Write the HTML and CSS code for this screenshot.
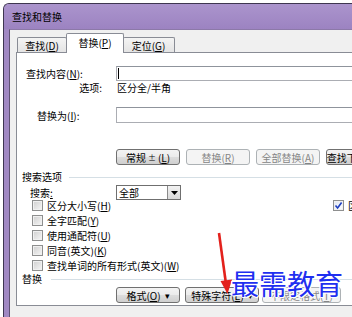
FILE: index.html
```html
<!DOCTYPE html>
<html lang="zh-CN">
<head>
<meta charset="utf-8">
<title>查找和替换</title>
<link rel="stylesheet" href="styles.css">
</head>
<body>
<div class="window">
  <div class="titlebar">查找和替换</div>
  <div class="frame">
    <div class="client">
      <div class="tabs">
        <div class="tab tab-first">查找(<u>D</u>)</div>
        <div class="tab tab-active">替换(<u>P</u>)</div>
        <div class="tab tab-last">定位(<u>G</u>)</div>
      </div>
      <div class="panel">
        <div class="row row-find">
          <span class="label label-find">查找内容(<u>N</u>):</span>
          <div class="input"><span class="caret"></span></div>
        </div>
        <div class="row row-opt">
          <span class="label label-opt">选项:</span>
          <span class="value">区分全/半角</span>
        </div>
        <div class="row row-repl">
          <span class="label label-repl">替换为(<u>I</u>):</span>
          <div class="input"></div>
        </div>
        <div class="btnrow btnrow-top">
          <div class="btn btn-w63">常规 <span class="sym">±</span> (<u>L</u>)</div>
          <div class="btn btn-w63 disabled">替换(<u>R</u>)</div>
          <div class="btn btn-w63 disabled">全部替换(<u>A</u>)</div>
          <div class="btn btn-w63">查找下一处(<u>F</u>)</div>
        </div>
        <div class="section section-search">
          <span class="section-title">搜索选项</span>
          <span class="rule"></span>
        </div>
        <div class="row row-search">
          <span class="label label-search">搜索<u>:</u></span>
          <div class="combo">
            <span class="combo-text">全部</span>
            <span class="combo-btn"><svg width="7" height="4" viewBox="0 0 7 4"><path d="M0 0H7L3.5 4Z" fill="#000"/></svg></span>
          </div>
        </div>
        <div class="options">
          <div class="opt opt-first">
            <span class="opt-left"><span class="cb"></span>区分大小写(<u>H</u>)</span>
            <span class="opt-right"><span class="cb cb-checked"><svg width="9" height="9" viewBox="0 0 9 9"><path d="M1.5 4.5L3.6 7L7.6 1.5" fill="none" stroke="#1f3fbf" stroke-width="1.6"/></svg></span>区分前缀(<u>X</u>)</span>
          </div>
          <div class="opt"><span class="cb"></span>全字匹配(<u>Y</u>)</div>
          <div class="opt"><span class="cb"></span>使用通配符(<u>U</u>)</div>
          <div class="opt"><span class="cb"></span>同音(英文)(<u>K</u>)</div>
          <div class="opt"><span class="cb"></span>查找单词的所有形式(英文)(<u>W</u>)</div>
        </div>
        <div class="section section-repl">
          <span class="section-title">替换</span>
          <span class="rule"></span>
        </div>
        <div class="btnrow btnrow-bottom">
          <div class="btn btn-format">格式(<u>O</u>) <span class="caret-down">▾</span></div>
          <div class="btn btn-special">特殊字符(<u>E</u>) <span class="caret-down">▾</span></div>
          <div class="btn btn-noformat disabled">不限定格式(<u>T</u>)</div>
        </div>
      </div>
    </div>
  </div>
</div>
<svg class="arrow" width="352" height="317" viewBox="0 0 352 317">
  <path d="M219 233L226 284" stroke="#e3211c" stroke-width="2.6" fill="none"/>
  <path d="M220.5 281L232 279.5L227.5 294Z" fill="#e3211c"/>
</svg>
<div class="watermark">最需教育</div>
</body>
</html>
```
FILE: styles.css
```css
* { box-sizing: border-box; }

html, body {
  margin: 0;
  padding: 0;
  width: 352px;
  height: 317px;
  overflow: hidden;
  background: #ffffff;
  font-family: "Noto Sans CJK SC", "Liberation Sans", sans-serif;
  font-size: 10px;
  color: #000;
}

u { text-decoration: underline; text-underline-offset: 1px; }

.window {
  margin: 3px 0 0 3px;
  width: 400px;
  height: 314px;
  background: #a189c3;
  border-top: 1px solid #3e3650;
  border-left: 1px solid #3e3650;
  border-top-left-radius: 6px;
  display: flex;
  flex-direction: column;
  overflow: hidden;
}

.titlebar {
  height: 25px;
  flex: none;
  display: flex;
  align-items: center;
  padding-left: 8px;
  background: linear-gradient(#ab94cd, #9c83c1);
  font-size: 10px;
  color: #000;
}

.frame {
  flex: 1;
  padding-left: 5px;
  display: flex;
}

.client {
  flex: 1;
  background: #f0f0f0;
  border-left: 1px solid #5f5273;
  border-top: 1px solid #8c79a8;
  padding: 3px 0 0 6px;
  display: flex;
  flex-direction: column;
}

.tabs {
  height: 19px;
  display: flex;
  align-items: flex-end;
  flex: none;
}

.tab {
  height: 15px;
  border: 1px solid #898c95;
  border-bottom: none;
  background: linear-gradient(#f4f4f4, #e4e4e4);
  display: flex;
  align-items: center;
  justify-content: center;
  border-radius: 2px 2px 0 0;
}

.tab-first { width: 50px; margin-left: 1px; }
.tab-last { width: 52px; border-left: none; }

.tab-active {
  width: 58px;
  height: 20px;
  margin: 0 -1px -1px -1px;
  background: #ffffff;
  position: relative;
  z-index: 1;
  padding-bottom: 2px;
}

.panel {
  width: 400px;
  height: 254px;
  flex: none;
  background: #ffffff;
  border: 1px solid #898c95;
  display: flex;
  flex-direction: column;
}

.row {
  display: flex;
  align-items: center;
  flex: none;
}

.label { width: 99px; flex: none; }

.row-find { margin-top: 13px; height: 15px; }
.label-find { padding-left: 9px; }

.input {
  width: 300px;
  height: 100%;
  border: 1px solid #abadb3;
  border-top-color: #8f949c;
  display: flex;
  align-items: center;
  padding-left: 1px;
}

.caret {
  width: 1px;
  height: 11px;
  background: #000;
}

.row-opt { height: 12px; }
.label-opt { text-align: right; padding-right: 14px; }
.value { padding-left: 1px; }

.row-repl { margin-top: 14px; height: 16px; }
.label-repl { padding-left: 20px; }

.btnrow {
  display: flex;
  flex: none;
  height: 16px;
  padding-left: 99px;
}

.btnrow-top { margin-top: 26px; gap: 6px; }

.btn {
  height: 16px;
  border: 1px solid #707070;
  border-radius: 3px;
  background: linear-gradient(#f3f3f3 0%, #ebebeb 50%, #dddddd 51%, #cfcfcf 100%);
  display: flex;
  align-items: center;
  justify-content: center;
  white-space: nowrap;
  overflow: hidden;
  flex: none;
}

.btn-w63 { width: 64px; }

.btn.disabled {
  border-color: #adb2b5;
  background: #f4f4f4;
  color: #858585;
}

.sym { font-size: 8px; margin: 0 2px; }

.section {
  display: flex;
  align-items: center;
  height: 12px;
  padding-left: 5px;
  flex: none;
}

.section-search { margin-top: 5px; }
.section-repl { margin-top: -1px; }

.rule {
  flex: 1;
  height: 1px;
  background: #d5dfe5;
  margin-left: 7px;
  margin-top: 2px;
}

.section-repl .rule { margin-left: 9px; }

.row-search { margin-top: 3px; height: 15px; }
.label-search { padding-left: 13px; }

.combo {
  width: 65px;
  height: 15px;
  border: 1px solid #6f6f6f;
  display: flex;
  align-items: center;
  justify-content: space-between;
  background: #fff;
}

.combo-text { padding-left: 2px; }

.combo-btn {
  width: 13px;
  height: 13px;
  border-left: 1px solid #8a8a8a;
  background: linear-gradient(#f2f2f2, #d9d9d9);
  display: flex;
  align-items: center;
  justify-content: center;
}

.options {
  margin-top: -2px;
  padding-left: 15px;
  display: flex;
  flex-direction: column;
  flex: none;
}

.opt {
  height: 15px;
  display: flex;
  align-items: center;
  white-space: nowrap;
}

.opt-left {
  width: 301px;
  display: flex;
  align-items: center;
}

.opt-right {
  display: flex;
  align-items: center;
}

.cb {
  width: 11px;
  height: 11px;
  border: 1px solid #8e8f8f;
  background: linear-gradient(135deg, #cfcfcf, #f6f6f6);
  box-shadow: inset 0 0 0 1px #f0f0f0;
  margin-right: 4px;
  flex: none;
  display: flex;
  align-items: center;
  justify-content: center;
}

.cb-checked {
  background: linear-gradient(135deg, #dfe6f3, #ffffff);
}

.btnrow-bottom { margin-top: 3px; }

.btn-format { width: 64px; }
.btn-special { width: 74px; margin-left: 5px; }
.btn-noformat { width: 79px; margin-left: 3px; }

.caret-down { font-size: 9px; margin-left: 4px; }

.arrow {
  position: absolute;
  left: 0;
  top: 0;
  pointer-events: none;
}

.watermark {
  position: absolute;
  left: 231px;
  top: 269px;
  font-size: 28px;
  line-height: 28px;
  color: #1f2ff0;
  white-space: nowrap;
  text-shadow: 1px 0 0 #fff, -1px 0 0 #fff, 0 1px 0 #fff, 0 -1px 0 #fff, 1px 1px 0 #fff, -1px -1px 0 #fff;
}
```
